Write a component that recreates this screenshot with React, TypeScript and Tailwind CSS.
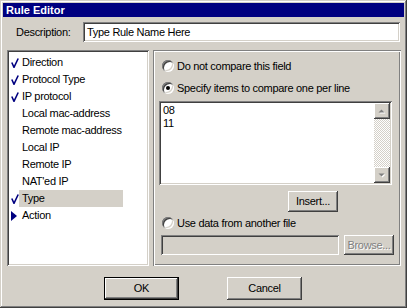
const raised =
  "shadow-[inset_-1px_-1px_#404040,inset_1px_1px_#ffffff,inset_-2px_-2px_#808080,inset_2px_2px_#d4d0c8]";

type Item = { label: string; mark?: "check" | "arrow"; selected?: boolean };

const items: Item[] = [
  { label: "Direction", mark: "check" },
  { label: "Protocol Type", mark: "check" },
  { label: "IP protocol", mark: "check" },
  { label: "Local mac-address" },
  { label: "Remote mac-address" },
  { label: "Local IP" },
  { label: "Remote IP" },
  { label: "NAT'ed IP" },
  { label: "Type", mark: "check", selected: true },
  { label: "Action", mark: "arrow" },
];

function Mark({ kind }: { kind?: Item["mark"] }) {
  if (kind === "check")
    return (
      <svg width="8" height="10" viewBox="0 0 8 10">
        <path d="M0.8 4.5 L3 9.3 L7.2 0.5" fill="none" stroke="#000080" strokeWidth="1.6" />
      </svg>
    );
  if (kind === "arrow")
    return (
      <svg width="6" height="10" viewBox="0 0 6 10">
        <path d="M0 0 L6 5 L0 10 Z" fill="#000080" />
      </svg>
    );
  return null;
}

function Radio({ checked }: { checked?: boolean }) {
  return (
    <div className="w-[12px] h-[12px] rounded-full bg-white shadow-[inset_1px_1px_#808080,inset_-1px_-1px_#ffffff,inset_2px_2px_#404040,inset_-2px_-2px_#d4d0c8] flex items-center justify-center shrink-0">
      {checked && <div className="w-[4px] h-[4px] rounded-full bg-black" />}
    </div>
  );
}

function ScrollArrow({ up }: { up?: boolean }) {
  return (
    <div className={`w-[16px] h-[16px] bg-[#d4d0c8] ${raised} flex items-center justify-center`}>
      <svg width="8" height="5" viewBox="0 0 8 5">
        {up ? (
          <>
            <path d="M1.5 4.5 L4.5 1.5 L7.5 4.5 Z" fill="#ffffff" />
            <path d="M0.5 3.5 L3.5 0.5 L6.5 3.5 Z" fill="#808080" />
          </>
        ) : (
          <>
            <path d="M1.5 1.5 L7.5 1.5 L4.5 4.5 Z" fill="#ffffff" />
            <path d="M0.5 0.5 L6.5 0.5 L3.5 3.5 Z" fill="#808080" />
          </>
        )}
      </svg>
    </div>
  );
}

export default function App() {
  return (
    <div className="w-[407px] h-[308px] p-[3px] flex flex-col bg-[#d4d0c8] text-black text-[11px] tracking-[-0.3px] font-['Liberation_Sans',Arial,sans-serif] shadow-[inset_-1px_-1px_#404040,inset_1px_1px_#d4d0c8,inset_-2px_-2px_#808080,inset_2px_2px_#ffffff]">
      <div className="h-[14px] bg-[#000080] text-white font-bold leading-[14px] pl-[3px] tracking-normal">
        Rule Editor
      </div>

      <div className="mt-[5px] flex items-center h-[20px]">
        <span className="ml-[13px] w-[67px]">Description:</span>
        <div className="w-[317px] h-[20px] bg-white pl-[4px] flex items-center shadow-[inset_1px_1px_#808080,inset_-1px_-1px_#ffffff,inset_2px_2px_#404040,inset_-2px_-2px_#d4d0c8]">
          Type Rule Name Here
        </div>
      </div>

      <div className="mt-[8px] flex h-[216px]">
        <div className="ml-[4px] w-[142px] h-full bg-white pt-[4px] shadow-[inset_1px_1px_#808080,inset_-1px_-1px_#ffffff,inset_2px_2px_#404040,inset_-2px_-2px_#d4d0c8]">
          {items.map((it) => (
            <div key={it.label} className="flex h-[17px] items-center">
              <div className="ml-[4px] w-[8px] flex items-center justify-start">
                <Mark kind={it.mark} />
              </div>
              <div
                className={`w-[104px] h-full pl-[3px] flex items-center ${
                  it.selected ? "bg-[#d4d0c8]" : ""
                }`}
              >
                {it.label}
              </div>
            </div>
          ))}
        </div>

        <div className="ml-[4px] w-[248px] h-full flex flex-col shadow-[inset_1px_1px_#808080,inset_-1px_-1px_#ffffff,inset_2px_2px_#ffffff,inset_-2px_-2px_#808080]">
          <div className="mt-[10px] ml-[9px] h-[12px] flex items-center gap-[3px]">
            <Radio />
            <span>Do not compare this field</span>
          </div>
          <div className="mt-[10px] ml-[9px] h-[12px] flex items-center gap-[3px]">
            <Radio checked />
            <span>Specify items to compare one per line</span>
          </div>

          <div className="mt-[7px] ml-[6px] w-[233px] h-[84px] bg-white flex p-[2px] shadow-[inset_1px_1px_#808080,inset_-1px_-1px_#ffffff,inset_2px_2px_#404040,inset_-2px_-2px_#d4d0c8]">
            <div className="flex-1 pl-[2px] pt-[1px] leading-[13px]">
              <div>08</div>
              <div>11</div>
            </div>
            <div className="w-[16px] flex flex-col">
              <ScrollArrow up />
              <div className="flex-1 bg-[repeating-conic-gradient(#d4d0c8_0%_25%,#ffffff_0%_50%)] bg-[length:2px_2px]" />
              <ScrollArrow />
            </div>
          </div>

          <button
            className={`mt-[6px] ml-[135px] w-[50px] h-[21px] bg-[#d4d0c8] ${raised} flex items-center justify-center`}
          >
            Insert...
          </button>

          <div className="mt-[5px] ml-[9px] h-[12px] flex items-center gap-[3px]">
            <Radio />
            <span>Use data from another file</span>
          </div>

          <div className="mt-[6px] flex">
            <div className="ml-[8px] w-[178px] h-[20px] bg-[#d4d0c8] shadow-[inset_1px_1px_#808080,inset_-1px_-1px_#ffffff,inset_2px_2px_#404040,inset_-2px_-2px_#d4d0c8]" />
            <button
              className={`ml-[5px] w-[50px] h-[20px] bg-[#d4d0c8] ${raised} flex items-center justify-center text-[#808080] [text-shadow:1px_1px_#ffffff]`}
            >
              Browse...
            </button>
          </div>
        </div>
      </div>

      <div className="mt-[11px] flex">
        <button
          className={`ml-[101px] w-[75px] h-[23px] bg-[#d4d0c8] border border-black flex items-center justify-center ${raised}`}
        >
          OK
        </button>
        <button
          className={`ml-[48px] w-[75px] h-[23px] bg-[#d4d0c8] flex items-center justify-center ${raised}`}
        >
          Cancel
        </button>
      </div>
    </div>
  );
}
